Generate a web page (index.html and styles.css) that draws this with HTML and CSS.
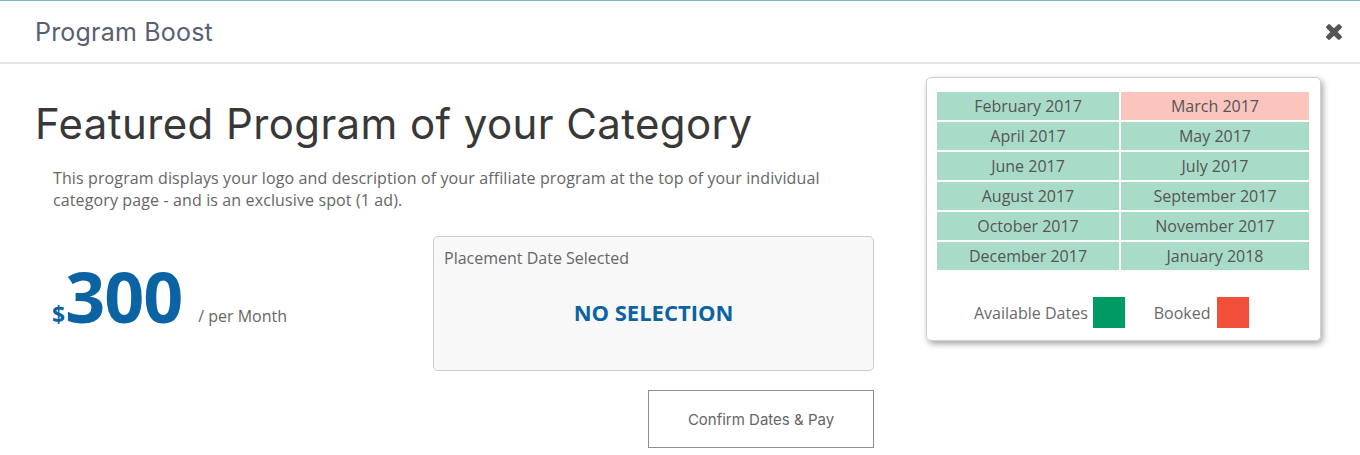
FILE: index.html
```html
<!DOCTYPE html>
<html lang="en">
<head>
<meta charset="utf-8">
<title>Program Boost</title>
<link rel="stylesheet" href="styles.css">
</head>
<body>
<div class="modal">
  <header class="modal-header">
    <h2 class="modal-title">Program Boost</h2>
    <button class="close" type="button" aria-label="Close">
      <svg viewBox="302 366 1188 1188" width="16" height="16"><path fill="currentColor" d="M1490 1322q0 40-28 68l-136 136q-28 28-68 28t-68-28l-294-294-294 294q-28 28-68 28t-68-28l-136-136q-28-28-28-68t28-68l294-294-294-294q-28-28-28-68t28-68l136-136q28-28 68-28t68 28l294 294 294-294q28-28 68-28t68 28l136 136q28 28 28 68t-28 68l-294 294 294 294q28 28 28 68z"/></svg>
    </button>
  </header>
  <div class="modal-body">
    <section class="main">
      <h1 class="headline">Featured Program of your Category</h1>
      <div class="content">
        <p class="desc">This program displays your logo and description of your affiliate program at the top of your individual category page - and is an exclusive spot (1 ad).</p>
        <div class="purchase">
          <div class="price">
            <span class="cur">$</span><span class="amount">300</span><span class="per">/ per Month</span>
          </div>
          <div class="selection">
            <div class="placement">
              <div class="placement-label">Placement Date Selected</div>
              <div class="placement-value">NO SELECTION</div>
            </div>
            <button class="confirm" type="button">Confirm Dates &amp; Pay</button>
          </div>
        </div>
      </div>
    </section>
    <aside class="calendar">
      <div class="months">
        <div class="month">February 2017</div>
        <div class="month booked">March 2017</div>
        <div class="month">April 2017</div>
        <div class="month">May 2017</div>
        <div class="month">June 2017</div>
        <div class="month">July 2017</div>
        <div class="month">August 2017</div>
        <div class="month">September 2017</div>
        <div class="month">October 2017</div>
        <div class="month">November 2017</div>
        <div class="month">December 2017</div>
        <div class="month">January 2018</div>
      </div>
      <div class="legend">
        <span class="legend-text">Available Dates</span><span class="swatch swatch-available"></span>
        <span class="legend-text legend-booked">Booked</span><span class="swatch swatch-booked"></span>
      </div>
    </aside>
  </div>
</div>
</body>
</html>
```
FILE: styles.css
```css
html, body {
  margin: 0;
  padding: 0;
  background: #fff;
}
body {
  font-family: "Open Sans", "Liberation Sans", sans-serif;
  color: #666;
}
.modal {
  border-top: 1px solid #7eb3d8;
  height: 454px;
  box-sizing: border-box;
}
.modal-header {
  height: 61px;
  border-bottom: 2px solid #e5e5e5;
  display: flex;
  align-items: center;
  justify-content: space-between;
  padding: 0 18px 0 35px;
}
.modal-title {
  margin: 0;
  font-family: "Inter", "Lato", sans-serif;
  font-weight: 400;
  font-size: 25px;
  letter-spacing: 0.2px;
  color: #596072;
}
.close {
  border: 0;
  background: none;
  padding: 0;
  margin: 0;
  color: #555;
  display: flex;
  width: 16px;
  height: 16px;
}
.modal-body {
  display: flex;
  justify-content: space-between;
  padding: 13px 39px 0 35px;
}
.main {
  width: 855px;
}
.headline {
  margin: 22px 0 0;
  font-family: "Inter", "Lato", sans-serif;
  font-weight: 400;
  font-size: 42px;
  line-height: 1.2;
  color: #383838;
  letter-spacing: 0.4px;
}
.content {
  padding-left: 18px;
}
.desc {
  margin: 18px 0 0;
  max-width: 790px;
  font-size: 16px;
  line-height: 22px;
  letter-spacing: 0.12px;
  color: #666;
}
.purchase {
  display: flex;
  align-items: flex-start;
  margin-top: 25px;
}
.price {
  width: 381px;
  margin-left: -1px;
  display: flex;
  align-items: baseline;
  padding-top: 25px;
  color: #0b63a3;
}
.cur {
  font-weight: 700;
  font-size: 23px;
}
.amount {
  font-weight: 700;
  font-size: 70px;
  line-height: 70px;
  letter-spacing: -1px;
}
.per {
  font-size: 16px;
  color: #666;
  margin-left: 16px;
  position: relative;
  top: -1px;
}
.selection {
  width: 441px;
  display: flex;
  flex-direction: column;
  align-items: flex-end;
}
.placement {
  width: 100%;
  box-sizing: border-box;
  height: 135px;
  background: #f8f8f8;
  border: 1px solid #cccccc;
  border-radius: 5px;
  padding: 10px;
}
.placement-label {
  font-size: 16px;
  line-height: 22px;
  color: #666;
}
.placement-value {
  margin-top: 28px;
  text-align: center;
  font-size: 22px;
  line-height: 30px;
  font-weight: 700;
  color: #0b63a3;
}
.confirm {
  margin-top: 19px;
  width: 226px;
  height: 58px;
  background: #fff;
  border: 1px solid #8e8e8e;
  font-family: "Inter", "Lato", sans-serif;
  font-size: 15px;
  color: #666;
  padding: 0;
}
.calendar {
  width: 395px;
  box-sizing: border-box;
  border: 1px solid #cfcfcf;
  border-radius: 5px;
  box-shadow: 2px 3px 6px rgba(0, 0, 0, 0.35);
  padding: 14px 11px 12px 10px;
  align-self: flex-start;
}
.months {
  display: grid;
  grid-template-columns: 182px 1fr;
  grid-auto-rows: 28px;
  gap: 2px;
}
.month {
  background: #a8dcc8;
  text-align: center;
  font-size: 16px;
  line-height: 28px;
  color: #555;
}
.month.booked {
  background: #fbc4bd;
}
.legend {
  display: flex;
  align-items: center;
  margin: 27px 0 0 37px;
  height: 31px;
}
.legend-text {
  font-size: 16px;
  color: #6a6a6a;
  margin-right: 5px;
}
.legend-booked {
  margin-left: 29px;
  margin-right: 6px;
}
.swatch {
  width: 32px;
  height: 31px;
  display: block;
}
.swatch-available {
  background: #009a64;
}
.swatch-booked {
  background: #f0503a;
}
```
